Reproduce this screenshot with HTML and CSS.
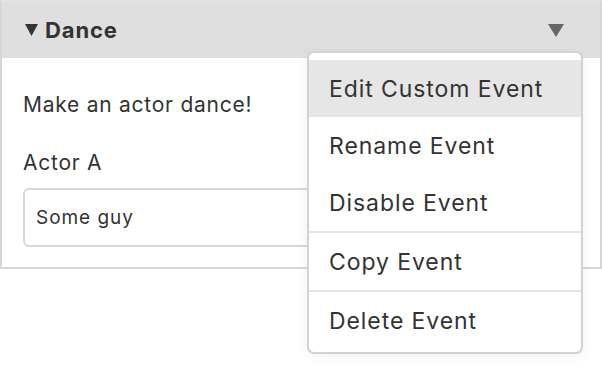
FILE: index.html
```html
<!DOCTYPE html>
<html>
<head>
    <title>Dance</title>
    <link rel="stylesheet" href="styles.css">
</head>
<body>
    <div class="event-card">
        <div class="event-header">
            <svg class="caret" width="13" height="12" viewBox="0 0 13 12"><polygon points="0,0 13,0 6.5,12" fill="#333"/></svg>
            <span class="event-title">Dance</span>
            <svg class="menu-toggle" width="16" height="13" viewBox="0 0 16 13"><polygon points="0,0 16,0 8,13" fill="#666"/></svg>
        </div>
        <div class="event-body">
            <p class="event-desc">Make an actor dance!</p>
            <label class="field-label">Actor A</label>
            <div class="field-input">Some guy</div>
        </div>
    </div>

    <div class="context-menu">
        <div class="menu-item active">Edit Custom Event</div>
        <div class="menu-item">Rename Event</div>
        <div class="menu-item">Disable Event</div>
        <div class="menu-divider"></div>
        <div class="menu-item">Copy Event</div>
        <div class="menu-divider"></div>
        <div class="menu-item">Delete Event</div>
    </div>
</body>
</html>
```

FILE: styles.css
```css
* {
    box-sizing: border-box;
}

body {
    margin: 0;
    font-family: Inter, "Liberation Sans", sans-serif;
    color: #333;
    background: #fff;
}

.event-card {
    width: 602px;
    border: 2px solid #d6d6d6;
    border-top-color: #e2e2e2;
}

.event-header {
    display: flex;
    align-items: center;
    height: 56px;
    padding: 0 36px 0 23px;
    background: #dfdfdf;
}

.caret {
    margin-right: 7px;
}

.event-title {
    font-size: 22px;
    font-weight: 700;
    letter-spacing: 0.04em;
    flex: 1;
}

.event-body {
    padding: 35px 21px 20px;
}

.event-desc {
    margin: 0 0 34px;
    font-size: 21px;
    line-height: 24px;
    letter-spacing: 0.75px;
}

.field-label {
    display: block;
    font-size: 21px;
    line-height: 24px;
    letter-spacing: 0.75px;
    margin-bottom: 13px;
}

.field-input {
    height: 59px;
    border: 2px solid #d6d6d6;
    border-radius: 6px;
    padding: 0 11px;
    display: flex;
    align-items: center;
    font-size: 19px;
    letter-spacing: 0.05em;
}

.context-menu {
    position: absolute;
    left: 307px;
    top: 51px;
    width: 276px;
    padding: 7px 0 3px;
    background: #fff;
    border: 2px solid #d2d2d2;
    border-radius: 7px;
    box-shadow: 0 2px 12px rgba(0, 0, 0, 0.06);
}

.menu-item {
    height: 57px;
    padding: 0 20px;
    display: flex;
    align-items: center;
    font-size: 23px;
    letter-spacing: 0.04em;
}

.menu-item.active {
    background: #e6e6e6;
}

.menu-divider {
    height: 2px;
    background: #e4e4e4;
}
```
